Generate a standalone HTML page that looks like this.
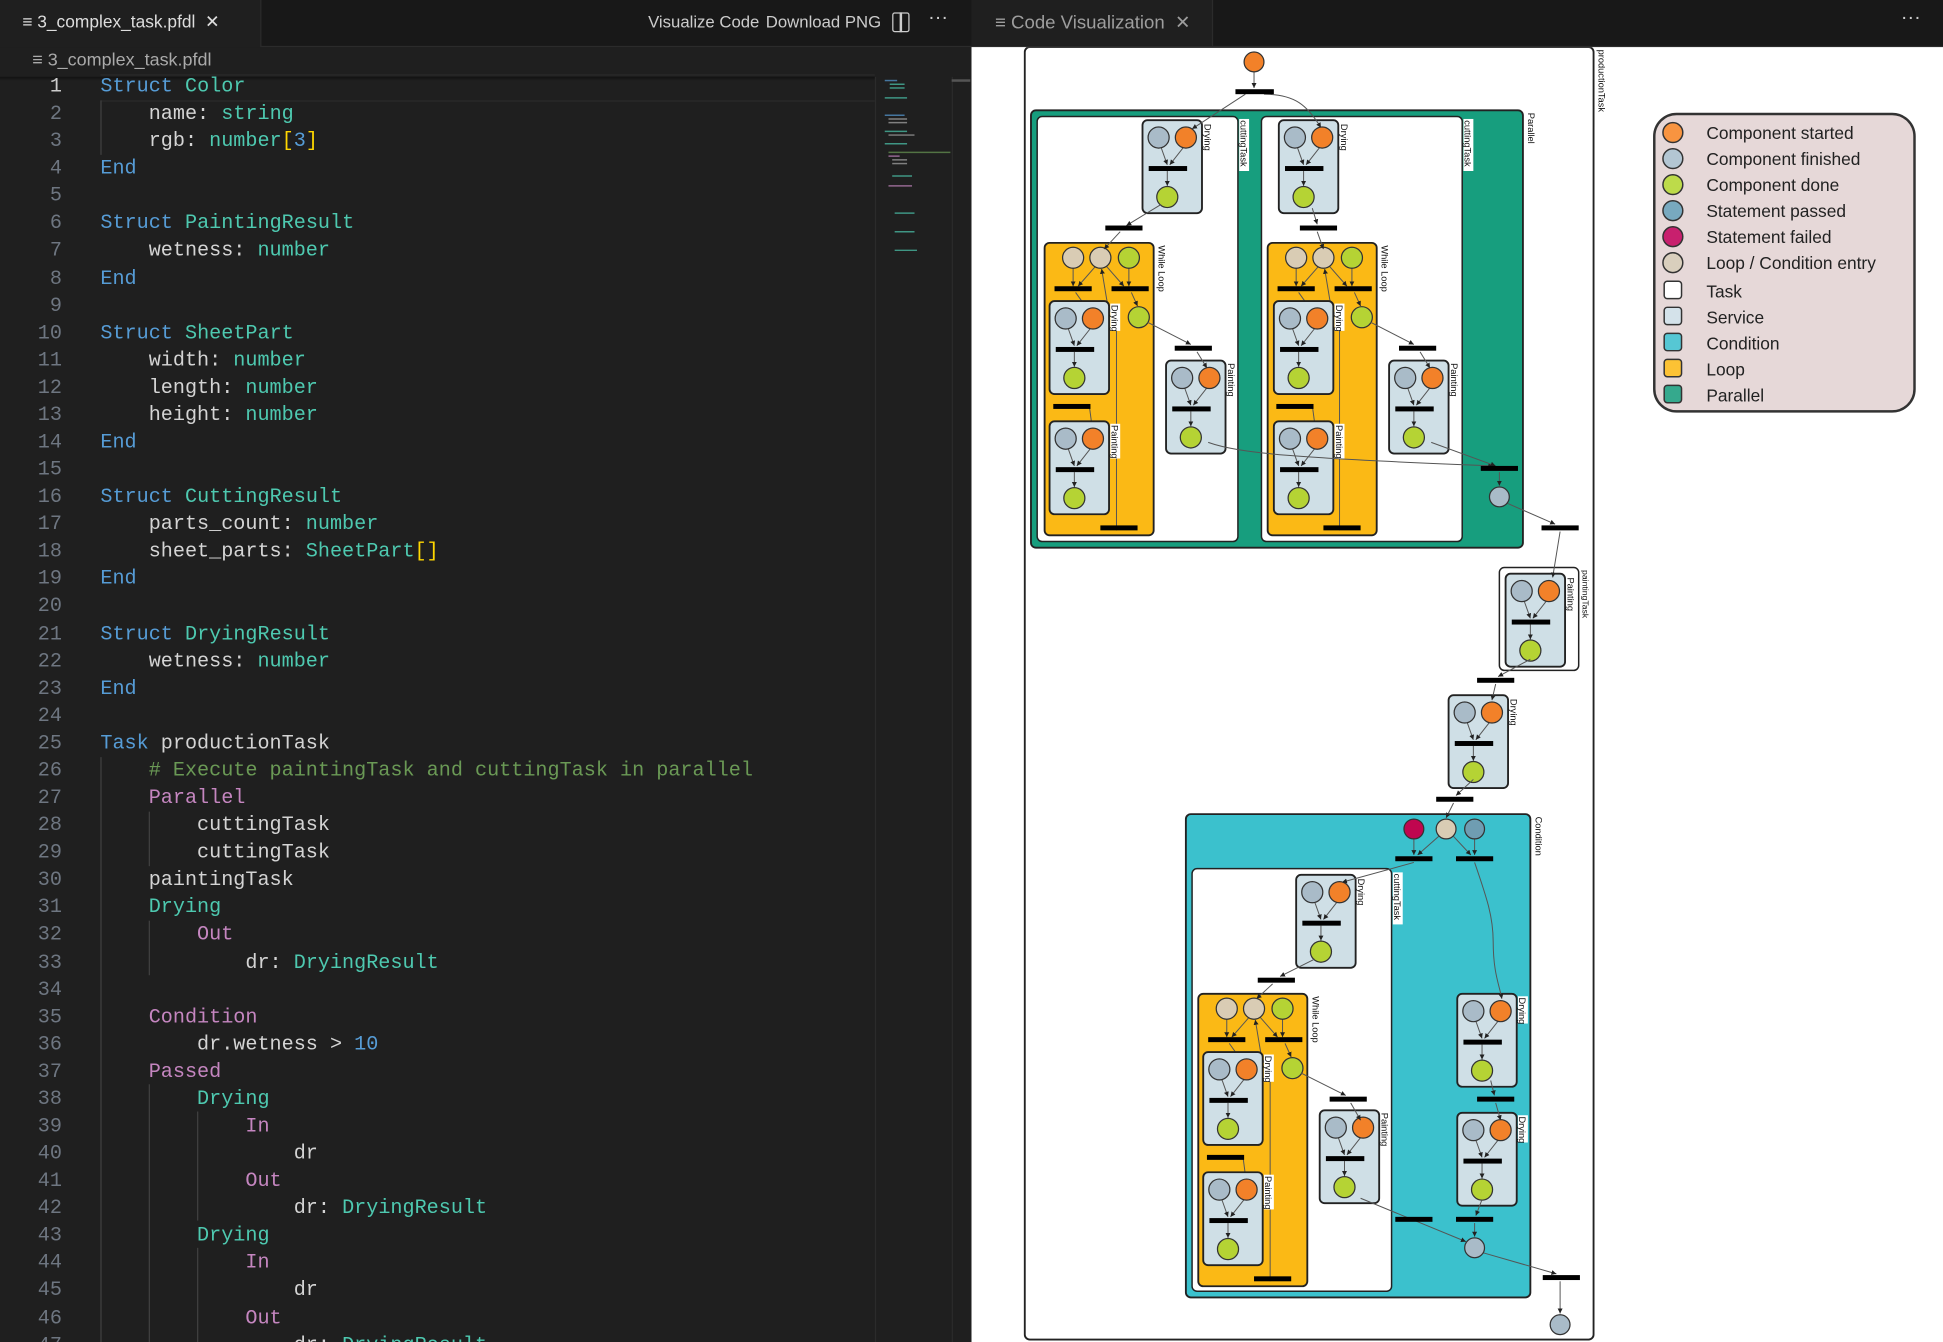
<!DOCTYPE html>
<html><head><meta charset="utf-8"><style>
html,body{margin:0;padding:0;width:1943px;height:1342px;overflow:hidden;background:#1f1f1f}
#root{position:absolute;left:0;top:0;width:1568px;height:1083px;transform:scale(1.23916);transform-origin:0 0;font-family:"Liberation Sans",sans-serif;overflow:hidden}
.abs{position:absolute}
.code{position:absolute;left:0;top:59px;width:706px;font-family:"Liberation Mono",monospace;font-size:16.25px}
.ln{height:22.09px;line-height:22.09px;white-space:pre;position:relative}
.ln .n{position:absolute;left:0;width:50px;text-align:right;color:#6e7681}
.ln .t{position:absolute;left:81px;color:#d4d4d4}
.k{color:#569cd6}.ty{color:#4ec9b0}.m{color:#c586c0}.c{color:#6a9955}.y{color:#ffd700}
</style></head><body><div id="root">
<!-- top bar -->
<div class="abs" style="left:0;top:0;width:1568px;height:37px;background:#181818;border-bottom:1px solid #2b2b2b"></div>
<div class="abs" style="left:0;top:0;width:210px;height:38px;background:#1f1f1f;border-right:1px solid #2b2b2b"></div>
<div class="abs" style="left:18px;top:9px;color:#ddd;font-size:14px;white-space:pre">≡ 3_complex_task.pfdl  ✕</div>
<div class="abs" style="left:523px;top:10px;color:#ccc;font-size:13.5px;white-space:pre">Visualize Code</div>
<div class="abs" style="left:618px;top:10px;color:#ccc;font-size:13.5px;white-space:pre">Download PNG</div>
<div class="abs" style="left:720px;top:10px;width:12px;height:14px;border:1.5px solid #ccc;border-radius:2px"></div>
<div class="abs" style="left:726px;top:10px;width:1.5px;height:16px;background:#ccc"></div>
<div class="abs" style="left:749px;top:6px;color:#ccc;font-size:16px">···</div>
<div class="abs" style="left:784px;top:0;width:194px;height:37px;background:#1f1f1f;border-right:1px solid #2b2b2b"></div>
<div class="abs" style="left:803px;top:9px;color:#9d9d9d;font-size:15px;white-space:pre">≡ Code Visualization  ✕</div>
<div class="abs" style="left:1534px;top:6px;color:#ccc;font-size:16px">···</div>
<!-- breadcrumb -->
<div class="abs" style="left:26px;top:41px;color:#aaa;font-size:14.5px;white-space:pre">≡ 3_complex_task.pfdl</div>
<div class="abs" style="left:0;top:62px;width:706px;height:3px;background:linear-gradient(#111,#1f1f1f)"></div>
<div class="abs" style="left:81px;top:60px;width:625px;height:20px;border:1px solid #2a2a2a;border-left:none;border-right:none"></div>
<!-- indent guides -->
<div class="abs" style="left:81px;top:81px;width:1px;height:44px;background:#404040"></div>
<div class="abs" style="left:81px;top:611px;width:1px;height:472px;background:#404040"></div>
<div class="abs" style="left:120px;top:655px;width:1px;height:44px;background:#404040"></div>
<div class="abs" style="left:120px;top:743px;width:1px;height:44px;background:#404040"></div>
<div class="abs" style="left:120px;top:875px;width:1px;height:208px;background:#404040"></div>
<div class="abs" style="left:159px;top:897px;width:1px;height:88px;background:#404040"></div>
<div class="abs" style="left:159px;top:1007px;width:1px;height:76px;background:#404040"></div>
<div class="code">
<div class="ln"><span class="n" style="color:#ccc">1</span><span class="t"><span class="k">Struct</span> <span class="ty">Color</span></span></div>
<div class="ln"><span class="n">2</span><span class="t">    name: <span class="ty">string</span></span></div>
<div class="ln"><span class="n">3</span><span class="t">    rgb: <span class="ty">number</span><span class="y">[</span><span class="k">3</span><span class="y">]</span></span></div>
<div class="ln"><span class="n">4</span><span class="t"><span class="k">End</span></span></div>
<div class="ln"><span class="n">5</span><span class="t"></span></div>
<div class="ln"><span class="n">6</span><span class="t"><span class="k">Struct</span> <span class="ty">PaintingResult</span></span></div>
<div class="ln"><span class="n">7</span><span class="t">    wetness: <span class="ty">number</span></span></div>
<div class="ln"><span class="n">8</span><span class="t"><span class="k">End</span></span></div>
<div class="ln"><span class="n">9</span><span class="t"></span></div>
<div class="ln"><span class="n">10</span><span class="t"><span class="k">Struct</span> <span class="ty">SheetPart</span></span></div>
<div class="ln"><span class="n">11</span><span class="t">    width: <span class="ty">number</span></span></div>
<div class="ln"><span class="n">12</span><span class="t">    length: <span class="ty">number</span></span></div>
<div class="ln"><span class="n">13</span><span class="t">    height: <span class="ty">number</span></span></div>
<div class="ln"><span class="n">14</span><span class="t"><span class="k">End</span></span></div>
<div class="ln"><span class="n">15</span><span class="t"></span></div>
<div class="ln"><span class="n">16</span><span class="t"><span class="k">Struct</span> <span class="ty">CuttingResult</span></span></div>
<div class="ln"><span class="n">17</span><span class="t">    parts_count: <span class="ty">number</span></span></div>
<div class="ln"><span class="n">18</span><span class="t">    sheet_parts: <span class="ty">SheetPart</span><span class="y">[]</span></span></div>
<div class="ln"><span class="n">19</span><span class="t"><span class="k">End</span></span></div>
<div class="ln"><span class="n">20</span><span class="t"></span></div>
<div class="ln"><span class="n">21</span><span class="t"><span class="k">Struct</span> <span class="ty">DryingResult</span></span></div>
<div class="ln"><span class="n">22</span><span class="t">    wetness: <span class="ty">number</span></span></div>
<div class="ln"><span class="n">23</span><span class="t"><span class="k">End</span></span></div>
<div class="ln"><span class="n">24</span><span class="t"></span></div>
<div class="ln"><span class="n">25</span><span class="t"><span class="k">Task</span> productionTask</span></div>
<div class="ln"><span class="n">26</span><span class="t">    <span class="c"># Execute paintingTask and cuttingTask in parallel</span></span></div>
<div class="ln"><span class="n">27</span><span class="t">    <span class="m">Parallel</span></span></div>
<div class="ln"><span class="n">28</span><span class="t">        cuttingTask</span></div>
<div class="ln"><span class="n">29</span><span class="t">        cuttingTask</span></div>
<div class="ln"><span class="n">30</span><span class="t">    paintingTask</span></div>
<div class="ln"><span class="n">31</span><span class="t">    <span class="ty">Drying</span></span></div>
<div class="ln"><span class="n">32</span><span class="t">        <span class="m">Out</span></span></div>
<div class="ln"><span class="n">33</span><span class="t">            dr: <span class="ty">DryingResult</span></span></div>
<div class="ln"><span class="n">34</span><span class="t"></span></div>
<div class="ln"><span class="n">35</span><span class="t">    <span class="m">Condition</span></span></div>
<div class="ln"><span class="n">36</span><span class="t">        dr.wetness &gt; <span class="k">10</span></span></div>
<div class="ln"><span class="n">37</span><span class="t">    <span class="m">Passed</span></span></div>
<div class="ln"><span class="n">38</span><span class="t">        <span class="ty">Drying</span></span></div>
<div class="ln"><span class="n">39</span><span class="t">            <span class="m">In</span></span></div>
<div class="ln"><span class="n">40</span><span class="t">                dr</span></div>
<div class="ln"><span class="n">41</span><span class="t">            <span class="m">Out</span></span></div>
<div class="ln"><span class="n">42</span><span class="t">                dr: <span class="ty">DryingResult</span></span></div>
<div class="ln"><span class="n">43</span><span class="t">        <span class="ty">Drying</span></span></div>
<div class="ln"><span class="n">44</span><span class="t">            <span class="m">In</span></span></div>
<div class="ln"><span class="n">45</span><span class="t">                dr</span></div>
<div class="ln"><span class="n">46</span><span class="t">            <span class="m">Out</span></span></div>
<div class="ln"><span class="n">47</span><span class="t">                dr: <span class="ty">DryingResult</span></span></div>
</div>
<!-- minimap -->
<div class="abs" style="left:706px;top:62px;width:1px;height:1021px;background:#2b2b2b"></div>
<svg class="abs" style="left:712px;top:62px" width="55" height="160">
<g stroke-width="1.2" opacity="0.7">
<line x1="2" y1="3" x2="12" y2="3" stroke="#569cd6"/><line x1="6" y1="6" x2="18" y2="6" stroke="#4ec9b0"/><line x1="6" y1="9" x2="18" y2="9" stroke="#4ec9b0"/>
<line x1="2" y1="17" x2="20" y2="17" stroke="#4ec9b0"/><line x1="2" y1="31" x2="18" y2="31" stroke="#569cd6"/><line x1="5" y1="34" x2="20" y2="34" stroke="#aaa"/><line x1="5" y1="37" x2="20" y2="37" stroke="#aaa"/>
<line x1="2" y1="44" x2="20" y2="44" stroke="#4ec9b0"/><line x1="5" y1="47" x2="26" y2="47" stroke="#aaa"/><line x1="2" y1="54" x2="20" y2="54" stroke="#4ec9b0"/>
<line x1="5" y1="61" x2="55" y2="61" stroke="#6a9955"/><line x1="5" y1="64" x2="14" y2="64" stroke="#c586c0"/><line x1="8" y1="67" x2="20" y2="67" stroke="#aaa"/><line x1="8" y1="70" x2="20" y2="70" stroke="#aaa"/>
<line x1="8" y1="80" x2="24" y2="80" stroke="#4ec9b0"/><line x1="5" y1="88" x2="24" y2="88" stroke="#c586c0"/><line x1="10" y1="110" x2="26" y2="110" stroke="#4ec9b0"/><line x1="10" y1="125" x2="26" y2="125" stroke="#4ec9b0"/><line x1="10" y1="140" x2="28" y2="140" stroke="#4ec9b0"/>
</g></svg>
<div class="abs" style="left:768px;top:62px;width:15px;height:1021px;background:#1f1f1f;border-left:1px solid #2b2b2b"></div>
<div class="abs" style="left:768px;top:64px;width:15px;height:2px;background:#555"></div>
<!-- right panel -->
<div class="abs" style="left:784px;top:38px;width:784px;height:1060px;background:#fff"></div>
<svg class="abs" style="left:784px;top:38px" width="784" height="1045" viewBox="784 38 784 1045" font-family="Liberation Sans, sans-serif">
<defs>
<marker id="a" markerWidth="6" markerHeight="6" refX="5" refY="3" orient="auto"><path d="M0,0.5 L5,3 L0,5.5z" fill="#222"/></marker>
<g id="svc">
<rect x="0" y="0" width="48" height="75" rx="4" fill="#cfdfe6" stroke="#222" stroke-width="1.5"/>
<line x1="15" y1="22" x2="20" y2="36" stroke="#555" stroke-width="0.8" marker-end="url(#a)"/>
<line x1="33" y1="22" x2="22" y2="36" stroke="#555" stroke-width="0.8" marker-end="url(#a)"/>
<line x1="20" y1="41" x2="20" y2="53" stroke="#555" stroke-width="0.8" marker-end="url(#a)"/>
<circle cx="13" cy="14" r="8.5" fill="#a9bbc8" stroke="#333" stroke-width="1"/>
<circle cx="35" cy="14" r="8.5" fill="#f28129" stroke="#333" stroke-width="1"/>
<rect x="5" y="37" width="31" height="4" fill="#000"/>
<circle cx="20" cy="62" r="8.5" fill="#b5d334" stroke="#333" stroke-width="1"/>
</g>
<g id="loop">
<rect x="0" y="0" width="88" height="236" rx="4" fill="#fbb915" stroke="#222" stroke-width="1.5"/>
<g stroke="#555" stroke-width="0.8" fill="none">
<line x1="23" y1="20" x2="23" y2="35" marker-end="url(#a)"/><line x1="41" y1="19" x2="27" y2="35" marker-end="url(#a)"/>
<line x1="50" y1="19" x2="64" y2="35" marker-end="url(#a)"/><line x1="68" y1="20" x2="68" y2="35" marker-end="url(#a)"/>
<line x1="70" y1="40" x2="75" y2="51" marker-end="url(#a)"/>
<line x1="25" y1="40" x2="35" y2="54"/>
<path d="M58,232 L58,70 C58,60 52,58 50,45 L46,21" marker-end="url(#a)"/>
<line x1="36" y1="131" x2="38" y2="146"/>
</g>
<circle cx="23" cy="12" r="8.5" fill="#d9ccb4" stroke="#333"/>
<circle cx="45" cy="12" r="8.5" fill="#d9ccb4" stroke="#333"/>
<circle cx="68" cy="12" r="8.5" fill="#b5d334" stroke="#333"/>
<rect x="8" y="35" width="30" height="4" fill="#000"/>
<rect x="54" y="35" width="30" height="4" fill="#000"/>
<circle cx="76" cy="60" r="8.5" fill="#b5d334" stroke="#333"/>
<rect x="7" y="130" width="30" height="4" fill="#000"/>
<rect x="45" y="228" width="30" height="4" fill="#000"/>
</g>
</defs>
<rect x="827" y="38" width="459" height="1043" rx="4" fill="#fff" stroke="#222" stroke-width="1.5"/>
<text transform="translate(1290,40) rotate(90)" font-size="7.5" fill="#111">productionTask</text>
<rect x="832" y="89" width="397" height="353" rx="4" fill="#179e7e" stroke="#222" stroke-width="1.5"/>
<text transform="translate(1233,91) rotate(90)" font-size="7.5" fill="#111">Parallel</text>
<rect x="837" y="94" width="162" height="343" rx="4" fill="#fff" stroke="#222" stroke-width="1.2"/>
<rect x="1018" y="94" width="162" height="343" rx="4" fill="#fff" stroke="#222" stroke-width="1.2"/>
<rect x="1000" y="96" width="8" height="42" fill="#fff"/><rect x="1181" y="96" width="8" height="42" fill="#fff"/>
<text transform="translate(1001,97) rotate(90)" font-size="7.5" fill="#111">cuttingTask</text>
<text transform="translate(1182,97) rotate(90)" font-size="7.5" fill="#111">cuttingTask</text>
<rect x="957" y="657" width="278" height="390" rx="4" fill="#3bc1cd" stroke="#222" stroke-width="1.5"/>
<text transform="translate(1239,659) rotate(90)" font-size="7.5" fill="#111">Condition</text>
<rect x="962" y="701" width="161" height="341" rx="4" fill="#fff" stroke="#222" stroke-width="1.2"/>
<rect x="1124" y="704" width="8" height="42" fill="#fff"/>
<text transform="translate(1125,705) rotate(90)" font-size="7.5" fill="#111">cuttingTask</text>
<rect x="1210" y="458" width="64" height="83" rx="4" fill="#fff" stroke="#222" stroke-width="1.2"/>
<text transform="translate(1277,460) rotate(90)" font-size="7" fill="#111">paintingTask</text>
<use href="#loop" x="843" y="196"/><use href="#loop" x="1023" y="196"/><use href="#loop" x="967" y="802"/>
<text transform="translate(935,198) rotate(90)" font-size="7.5" fill="#111">While Loop</text>
<text transform="translate(1115,198) rotate(90)" font-size="7.5" fill="#111">While Loop</text>
<text transform="translate(1059,804) rotate(90)" font-size="7.5" fill="#111">While Loop</text>
<use href="#svc" x="922" y="97"/><use href="#svc" x="1032" y="97"/>
<use href="#svc" x="847" y="243"/><use href="#svc" x="847" y="340"/><use href="#svc" x="941" y="291"/>
<use href="#svc" x="1028" y="243"/><use href="#svc" x="1028" y="340"/><use href="#svc" x="1121" y="291"/>
<use href="#svc" x="1215" y="463"/><use href="#svc" x="1169" y="561"/>
<use href="#svc" x="1046" y="706"/><use href="#svc" x="971" y="849"/><use href="#svc" x="971" y="946"/><use href="#svc" x="1065" y="896"/>
<use href="#svc" x="1176" y="802"/><use href="#svc" x="1176" y="898"/>
<g font-size="7.5" fill="#111">
<g fill="#fff"><rect x="971" y="99" width="8" height="22"/><rect x="1081" y="99" width="8" height="22"/><rect x="896" y="245" width="8" height="22"/><rect x="896" y="342" width="8" height="28"/><rect x="1077" y="245" width="8" height="22"/><rect x="1077" y="342" width="8" height="28"/><rect x="1264" y="465" width="8" height="26"/><rect x="1218" y="563" width="8" height="22"/><rect x="1095" y="708" width="8" height="22"/><rect x="1020" y="851" width="8" height="22"/><rect x="1020" y="948" width="8" height="28"/><rect x="1225" y="804" width="8" height="22"/><rect x="1225" y="900" width="8" height="22"/></g>
<text transform="translate(972,100) rotate(90)">Drying</text>
<text transform="translate(1082,100) rotate(90)">Drying</text>
<text transform="translate(897,246) rotate(90)">Drying</text>
<text transform="translate(897,343) rotate(90)">Painting</text>
<text transform="translate(991,293) rotate(90)">Painting</text>
<text transform="translate(1078,246) rotate(90)">Drying</text>
<text transform="translate(1078,343) rotate(90)">Painting</text>
<text transform="translate(1171,293) rotate(90)">Painting</text>
<text transform="translate(1265,466) rotate(90)">Painting</text>
<text transform="translate(1219,564) rotate(90)">Drying</text>
<text transform="translate(1096,709) rotate(90)">Drying</text>
<text transform="translate(1021,852) rotate(90)">Drying</text>
<text transform="translate(1021,949) rotate(90)">Painting</text>
<text transform="translate(1115,898) rotate(90)">Painting</text>
<text transform="translate(1226,805) rotate(90)">Drying</text>
<text transform="translate(1226,901) rotate(90)">Drying</text>
</g>
<g stroke="#555" stroke-width="0.8" fill="none">
<line x1="1012" y1="58" x2="1012" y2="71" marker-end="url(#a)"/>
<path d="M1005,76 L962,104" marker-end="url(#a)"/>
<path d="M1020,76 C1045,76 1055,85 1066,103" marker-end="url(#a)"/>
<path d="M937,165 L909,182" marker-end="url(#a)"/><path d="M904,187 L891,201" marker-end="url(#a)"/>
<path d="M1059,168 L1063,181" marker-end="url(#a)"/><path d="M1063,187 L1068,201" marker-end="url(#a)"/>
<path d="M926,260 L961,278" marker-end="url(#a)"/><path d="M966,284 L974,297" marker-end="url(#a)"/>
<path d="M1106,260 L1141,278" marker-end="url(#a)"/><path d="M1146,284 L1154,297" marker-end="url(#a)"/>
<path d="M975,357 C1000,366 1050,370 1205,376" marker-end="url(#a)"/>
<path d="M1155,357 L1207,376" marker-end="url(#a)"/>
<line x1="1210" y1="381" x2="1210" y2="392" marker-end="url(#a)"/>
<path d="M1216,406 L1255,423" marker-end="url(#a)"/>
<path d="M1259,429 L1253,466" marker-end="url(#a)"/>
<path d="M1235,532 L1209,546" marker-end="url(#a)"/><path d="M1207,552 L1204,565" marker-end="url(#a)"/>
<path d="M1189,629 L1175,642" marker-end="url(#a)"/><path d="M1173,648 L1167,660" marker-end="url(#a)"/>
<line x1="1141" y1="677" x2="1141" y2="690" marker-end="url(#a)"/>
<line x1="1190" y1="677" x2="1190" y2="690" marker-end="url(#a)"/>
<path d="M1161,675 L1144,690" marker-end="url(#a)"/><path d="M1173,675 L1187,690" marker-end="url(#a)"/>
<path d="M1141,696 L1083,712" marker-end="url(#a)"/>
<path d="M1190,696 C1200,725 1205,740 1205,760 C1205,785 1210,795 1212,806" marker-end="url(#a)"/>
<path d="M1061,774 L1033,788" marker-end="url(#a)"/><path d="M1027,794 L1014,806" marker-end="url(#a)"/>
<path d="M1050,866 L1086,884" marker-end="url(#a)"/><path d="M1090,890 L1098,904" marker-end="url(#a)"/>
<path d="M1203,872 L1206,884" marker-end="url(#a)"/><path d="M1207,890 L1211,904" marker-end="url(#a)"/>
<path d="M1098,967 L1183,1002" marker-end="url(#a)"/>
<path d="M1196,968 L1191,981" marker-end="url(#a)"/><line x1="1190" y1="987" x2="1190" y2="998" marker-end="url(#a)"/>
<path d="M1197,1011 L1256,1028" marker-end="url(#a)"/>
<line x1="1259" y1="1034" x2="1259" y2="1060" marker-end="url(#a)"/>
</g>
<circle cx="1012" cy="50" r="8" fill="#f28129" stroke="#333"/>
<g fill="#000">
<rect x="997" y="72" width="31" height="4"/>
<rect x="892" y="182" width="30" height="4"/><rect x="1049" y="182" width="30" height="4"/>
<rect x="948" y="279" width="30" height="4"/><rect x="1129" y="279" width="30" height="4"/>
<rect x="1195" y="376" width="30" height="4"/><rect x="1244" y="424" width="30" height="4"/>
<rect x="1192" y="547" width="30" height="4"/><rect x="1159" y="643" width="30" height="4"/>
<rect x="1126" y="691" width="30" height="4"/><rect x="1175" y="691" width="30" height="4"/>
<rect x="1015" y="789" width="30" height="4"/><rect x="1073" y="885" width="30" height="4"/>
<rect x="1192" y="885" width="30" height="4"/>
<rect x="1126" y="982" width="30" height="4"/><rect x="1175" y="982" width="30" height="4"/>
<rect x="1245" y="1029" width="30" height="4"/>
</g>
<circle cx="1210" cy="401" r="8" fill="#a9bbc8" stroke="#333"/>
<circle cx="1141" cy="669" r="8" fill="#c0064f" stroke="#333"/>
<circle cx="1167" cy="669" r="8" fill="#d9ccb4" stroke="#333"/>
<circle cx="1190" cy="669" r="8" fill="#6f9db2" stroke="#333"/>
<circle cx="1190" cy="1007" r="8" fill="#a9bbc8" stroke="#333"/>
<circle cx="1259" cy="1069" r="8" fill="#a9bbc8" stroke="#333"/>
<rect x="1335" y="92" width="210" height="240" rx="18" fill="#e6d8d8" stroke="#333" stroke-width="2"/>
<g stroke="#333" stroke-width="1.2">
<circle cx="1350" cy="107" r="8" fill="#f89440"/>
<circle cx="1350" cy="128" r="8" fill="#b3c6d3"/>
<circle cx="1350" cy="149" r="8" fill="#bddb4a"/>
<circle cx="1350" cy="170" r="8" fill="#78a9bf"/>
<circle cx="1350" cy="191" r="8" fill="#c8206e"/>
<circle cx="1350" cy="212" r="8" fill="#d9cfbd"/>
<rect x="1343" y="227" width="14" height="14" rx="2.5" fill="#fff"/>
<rect x="1343" y="248" width="14" height="14" rx="2.5" fill="#d4e2ea"/>
<rect x="1343" y="269" width="14" height="14" rx="2.5" fill="#56c7d4"/>
<rect x="1343" y="290" width="14" height="14" rx="2.5" fill="#fcc234"/>
<rect x="1343" y="311" width="14" height="14" rx="2.5" fill="#35a98d"/>
</g>
<g font-size="14" fill="#222">
<text x="1377" y="112">Component started</text>
<text x="1377" y="133">Component finished</text>
<text x="1377" y="154">Component done</text>
<text x="1377" y="175">Statement passed</text>
<text x="1377" y="196">Statement failed</text>
<text x="1377" y="217">Loop / Condition entry</text>
<text x="1377" y="240">Task</text>
<text x="1377" y="261">Service</text>
<text x="1377" y="282">Condition</text>
<text x="1377" y="303">Loop</text>
<text x="1377" y="324">Parallel</text>
</g>
</svg>
</div></body></html>
